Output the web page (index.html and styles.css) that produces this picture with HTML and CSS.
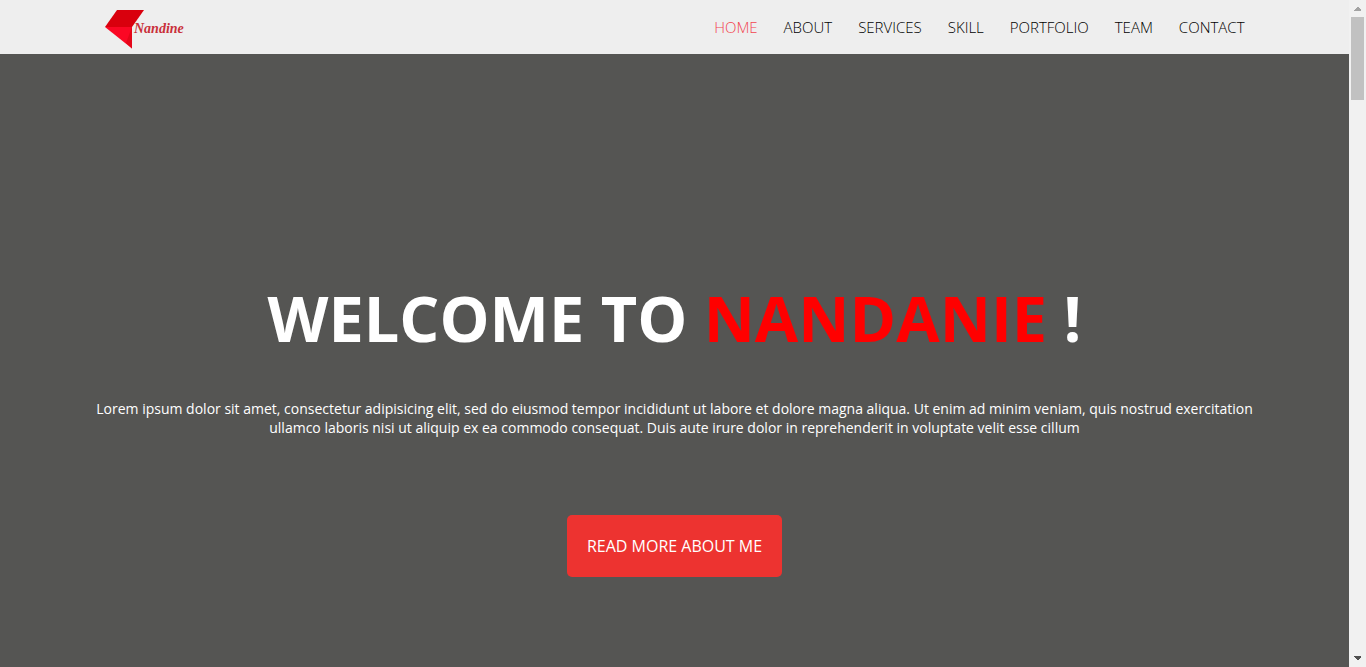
FILE: index.html
```html
<!DOCTYPE html>
<html lang="en">
<head>
<meta charset="utf-8">
<meta name="viewport" content="width=device-width, initial-scale=1">
<title>Nandine</title>
<link rel="stylesheet" href="styles.css">
</head>
<body>
<div class="page">
  <header class="header">
    <div class="container header-row">
      <a class="logo" href="#home" aria-label="Nandine">
        <svg width="84" height="40" viewBox="0 0 84 40">
          <path d="M12 1H39L27 18H0z" fill="#d9000d"/>
          <path d="M0 18H27V39.500z" fill="#fb0724"/>
          <path d="M27 18V39.500L21 34z" fill="#e40619"/>
          <text class="logo-text" x="29" y="24">Nandine</text>
        </svg>
      </a>
      <nav class="nav">
        <a class="nav-link active" href="#home">HOME</a>
        <a class="nav-link" href="#about">ABOUT</a>
        <a class="nav-link" href="#services">SERVICES</a>
        <a class="nav-link" href="#skill">SKILL</a>
        <a class="nav-link" href="#portfolio">PORTFOLIO</a>
        <a class="nav-link" href="#team">TEAM</a>
        <a class="nav-link" href="#contact">CONTACT</a>
      </nav>
    </div>
  </header>
  <main class="hero" id="home">
    <div class="container hero-body">
      <h1 class="title">WELCOME TO <span class="title-name">NANDANIE</span> !</h1>
      <p class="lead">Lorem ipsum dolor sit amet, consectetur adipisicing elit, sed do eiusmod tempor incididunt ut labore et dolore magna aliqua. Ut enim ad minim veniam, quis nostrud exercitation ullamco laboris nisi ut aliquip ex ea commodo consequat. Duis aute irure dolor in reprehenderit in voluptate velit esse cillum</p>
      <a class="cta" href="#about">READ MORE ABOUT ME</a>
    </div>
  </main>
</div>
<div class="scrollbar" aria-hidden="true">
  <svg width="17" height="17" viewBox="0 0 17 17" shape-rendering="crispEdges"><path d="M5 11V10L8 7H9L12 10V11z" fill="#a3a3a3"/></svg>
  <div class="track"><div class="thumb"></div></div>
  <svg width="17" height="17" viewBox="0 0 17 17" shape-rendering="crispEdges"><path d="M5 6V7L8 10H9L12 7V6z" fill="#505050"/></svg>
</div>
</body>
</html>
```

FILE: styles.css
```css
* {
  box-sizing: border-box;
}

body {
  display: flex;
  min-height: 100vh;
  margin: 0;
  font-family: "Open Sans", "Noto Sans", sans-serif;
  font-size: 14px;
}

.page {
  display: flex;
  flex: 1;
  flex-direction: column;
  min-width: 0;
}

.container {
  width: 100%;
  max-width: 1170px;
  margin: 0 auto;
}

.header {
  background: #eee;
}

.header-row {
  display: flex;
  align-items: center;
  justify-content: space-between;
  min-height: 54px;
  padding: 0 15px;
}

.logo {
  display: flex;
  padding-top: 4px;
}

.logo-text {
  font: italic bold 14px "Liberation Serif", serif;
  fill: #c9303a;
}

.nav {
  display: flex;
  flex-wrap: wrap;
  gap: 26px;
}

.nav-link {
  color: #000;
  font-size: 15px;
  font-weight: 300;
  line-height: 20px;
  text-decoration: none;
}

.nav-link.active {
  color: #f2454f;
}

.hero {
  flex: 1;
  background: #555553;
}

.hero-body {
  display: flex;
  flex-direction: column;
  align-items: center;
  padding: 220px 0 90px;
  color: #fff;
  text-align: center;
}

.title {
  margin: 0 0 37px;
  font-size: 63px;
  font-weight: 700;
  line-height: 88px;
}

.title-name {
  color: #f00;
}

.lead {
  margin: 0 0 78px;
  line-height: 19px;
}

.cta {
  padding: 20px;
  border-radius: 5px;
  background: #ed3330;
  color: #fff;
  font-size: 16px;
  line-height: 22px;
  text-decoration: none;
}

.scrollbar {
  display: flex;
  flex-direction: column;
  width: 17px;
  background: #f1f1f1;
}

.track {
  flex: 1;
  padding: 0 2px;
}

.thumb {
  height: 83px;
  background: #c1c1c1;
}
```
